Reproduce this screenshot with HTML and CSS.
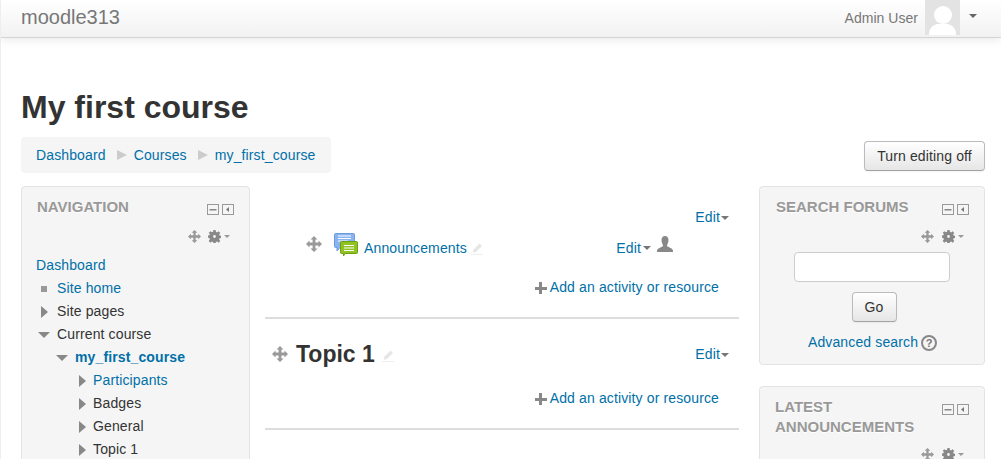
FILE: index.html
```html
<!DOCTYPE html>
<html lang="en">
<head>
<meta charset="utf-8">
<title>My first course</title>
<link rel="stylesheet" href="styles.css">
</head>
<body>
<svg class="defs" width="0" height="0" aria-hidden="true">
  <defs>
    <symbol id="move" viewBox="0 0 16 16"><path d="M8 0l3.500 3.500H9.400v3.100h3.100V4.500L16 8l-3.500 3.500V9.400H9.400v3.100h2.100L8 16l-3.500-3.500h2.100V9.400H3.500v2.100L0 8l3.500-3.500v2.100h3.100V3.500H4.500z" fill="#999"/></symbol>
    <symbol id="gear" viewBox="0 0 14 14"><path fill-rule="evenodd" d="M5.800 0h2.400l.3 2 1.300.6L11.500 1.400l1.700 1.700L12 4.700l.5 1.300 1.500.3v2.400l-1.500.3-.5 1.300 1.200 1.600-1.700 1.700-1.700-1.200-1.300.5-.3 1.500H5.800l-.3-1.500-1.300-.5-1.700 1.200-1.700-1.700L2 10l-.5-1.300L0 8.400V6l1.500-.3L2 4.400.8 2.900l1.700-1.600L4.200 2.500l1.300-.5zM7 5.500a1.500 1.500 0 1 0 0 3 1.500 1.500 0 0 0 0-3z" fill="#888"/></symbol>
    <symbol id="minus" viewBox="0 0 12 11"><rect x=".5" y=".5" width="11" height="10" fill="#f5f5f5" stroke="#999"/><rect x="2.500" y="5" width="7" height="1.500" fill="#888"/></symbol>
    <symbol id="dock" viewBox="0 0 12 11"><rect x=".5" y=".5" width="11" height="10" fill="#f5f5f5" stroke="#999"/><path d="M7 3v5L4 5.500z" fill="#777"/></symbol>
    <symbol id="pen" viewBox="0 0 12 12"><path d="M8.500.5l2.500 2.500-6 6-3.300.8.800-3.300z" fill="#e6e6e6"/><rect x="0" y="11" width="12" height="1" fill="#eee"/></symbol>
  </defs>
</svg>

<header class="navbar">
  <a class="brand">moodle313</a>
  <div class="usermenu">
    <span class="username">Admin User</span>
    <span class="avatar">
      <svg width="35" height="35" viewBox="0 0 35 35"><rect width="35" height="35" fill="#e3e3e3"/><ellipse cx="18" cy="15" rx="9" ry="9" fill="#fff"/><path d="M4 35c0-7 3-9 8-11h11c5 2 8 4 8 11z" fill="#fff"/></svg>
    </span>
    <span class="caret navcaret"></span>
  </div>
</header>

<div class="page">
  <h1 class="title">My first course</h1>
  <div class="headbar">
    <nav class="crumbs">
      <a>Dashboard</a><span class="sep"></span><a>Courses</a><span class="sep"></span><a>my_first_course</a>
    </nav>
    <button class="btn editbtn">Turn editing off</button>
  </div>

  <div class="cols">
    <aside class="block navblock">
      <div class="blockhead">
        <h2>NAVIGATION</h2>
        <div class="winctl"><svg class="ctl"><use href="#minus"/></svg><svg class="ctl"><use href="#dock"/></svg></div>
      </div>
      <div class="blockctl"><svg class="i13"><use href="#move"/></svg><svg class="i13 gear"><use href="#gear"/></svg><span class="caret small"></span></div>
      <ul class="tree">
        <li class="lvl0"><a>Dashboard</a></li>
        <li class="lvl1"><span class="square"></span><a>Site home</a></li>
        <li class="lvl1"><span class="tri-r"></span><span>Site pages</span></li>
        <li class="lvl1"><span class="tri-d"></span><span>Current course</span></li>
        <li class="lvl2"><span class="tri-d"></span><a class="strong">my_first_course</a></li>
        <li class="lvl3"><span class="tri-r"></span><a>Participants</a></li>
        <li class="lvl3"><span class="tri-r"></span><span>Badges</span></li>
        <li class="lvl3"><span class="tri-r"></span><span>General</span></li>
        <li class="lvl3"><span class="tri-r"></span><span>Topic 1</span></li>
      </ul>
    </aside>

    <main class="center">
      <section class="sect first">
        <div class="sectedit"><a>Edit</a><span class="caret"></span></div>
        <div class="activity">
          <svg class="i16 actmove"><use href="#move"/></svg>
          <svg class="forum" width="24" height="24" viewBox="0 0 24 24">
            <path d="M1.500.500h18a1 1 0 0 1 1 1v12a1 1 0 0 1-1 1H6l-3 3.500v-3.500H1.500a1 1 0 0 1-1-1v-12a1 1 0 0 1 1-1z" fill="#8ab4f0" stroke="#6d9ae0"/>
            <path d="M4 3h13M4 5.500h13M4 8h10" stroke="#fff"/>
            <path d="M7.500 8.500h15a1 1 0 0 1 1 1v10a1 1 0 0 1-1 1H11l-1.500 2.500v-2.500h-2a1 1 0 0 1-1-1v-10a1 1 0 0 1 1-1z" fill="#8fc31f" stroke="#6f9e12"/>
            <path d="M10 12.500h10M10 15h10M10 17.500h10" stroke="#fff"/>
          </svg>
          <a class="actname">Announcements</a>
          <svg class="i12 pen"><use href="#pen"/></svg>
          <span class="actright">
            <a>Edit</a><span class="caret"></span>
            <svg class="person" width="16" height="16" viewBox="0 0 16 16"><path d="M8 0c2.300 0 3.500 1.700 3.500 4S10.300 8.500 10 9.500c0 1 1.500 1.500 3.500 2.500 1.500.7 2.500 1.500 2.500 3v1H0v-1c0-1.500 1-2.300 2.500-3 2-1 3.500-1.500 3.500-2.500C5.700 8.500 4.500 6.300 4.500 4S5.700 0 8 0z" fill="#888"/></svg>
          </span>
        </div>
        <div class="addres"><span class="plus"></span><a>Add an activity or resource</a></div>
      </section>

      <section class="sect second">
        <div class="topichead">
          <svg class="i16"><use href="#move"/></svg>
          <h3>Topic 1</h3>
          <svg class="i12 pen2"><use href="#pen"/></svg>
          <div class="topicedit"><a>Edit</a><span class="caret"></span></div>
        </div>
        <div class="addres"><span class="plus"></span><a>Add an activity or resource</a></div>
      </section>
    </main>

    <aside class="rightcol">
      <div class="block search">
        <div class="blockhead">
          <h2>SEARCH FORUMS</h2>
          <div class="winctl"><svg class="ctl"><use href="#minus"/></svg><svg class="ctl"><use href="#dock"/></svg></div>
        </div>
        <div class="blockctl"><svg class="i13"><use href="#move"/></svg><svg class="i13 gear"><use href="#gear"/></svg><span class="caret small"></span></div>
        <div class="searchbody">
          <input class="field" type="text" aria-label="Search">
          <button class="btn gobtn">Go</button>
          <div class="adv"><a>Advanced search</a><span class="help">?</span></div>
        </div>
      </div>
      <div class="block latest">
        <div class="blockhead">
          <h2>LATEST ANNOUNCEMENTS</h2>
          <div class="winctl"><svg class="ctl"><use href="#minus"/></svg><svg class="ctl"><use href="#dock"/></svg></div>
        </div>
        <div class="blockctl"><svg class="i13"><use href="#move"/></svg><svg class="i13 gear"><use href="#gear"/></svg><span class="caret small"></span></div>
      </div>
    </aside>
  </div>
</div>
</body>
</html>
```

FILE: styles.css
```css
* { box-sizing: border-box; }
html, body { height: 459px; overflow: hidden; }
body {
  margin: 0;
  background: #fff;
  color: #333;
  font: 14px/20px "Liberation Sans", Arial, sans-serif;
  letter-spacing: .13px;
  border-left: 1px solid #eee;
}
a { color: #0070a8; text-decoration: none; }
.defs { position: absolute; }
svg { display: block; flex: none; }
.i12 { width: 12px; height: 12px; }
.i13 { width: 13px; height: 13px; }
.i16 { width: 16px; height: 16px; }
.ctl { width: 12px; height: 11px; }

.navbar {
  height: 38px;
  display: flex;
  justify-content: space-between;
  background: linear-gradient(#fff, #f2f2f2);
  border-bottom: 1px solid #d4d4d4;
  box-shadow: 0 1px 10px rgba(0,0,0,.1);
  padding-left: 20px;
}
.brand { color: #777; font-size: 20px; line-height: 35px; letter-spacing: 0; }
.usermenu { display: flex; align-items: flex-start; }
.username { color: #777; line-height: 36px; margin-right: 7px; letter-spacing: .03px; }
.avatar { width: 35px; height: 35px; overflow: hidden; }
.caret {
  display: inline-block;
  width: 0; height: 0;
  border-left: 4px solid transparent;
  border-right: 4px solid transparent;
  border-top: 4px solid #777;
  vertical-align: middle;
  margin-left: 1px;
}
.navcaret { margin: 14px 24px 0 9px; border-top-color: #666; }
.caret.small { border-left-width: 3.500px; border-right-width: 3.500px; border-top-width: 3.500px; border-top-color: #999; margin-left: 3px; }

.page { padding: 0 16px 0 20px; }
.title { margin: 49px 0 0; font-size: 32px; line-height: 40px; font-weight: 700; color: #333; letter-spacing: 0; }
.headbar { display: flex; justify-content: space-between; align-items: flex-end; margin-top: 10px; height: 36px; }
.crumbs {
  display: flex; align-items: center;
  height: 36px; padding: 0 15px 0 15px;
  background: #f5f5f5; border-radius: 4px;
}
.crumbs a:last-child { margin-right: 1px; }
.sep {
  width: 0; height: 0; margin: 0 7px 0 11px;
  border-left: 10px solid #ccc;
  border-top: 5px solid transparent;
  border-bottom: 5px solid transparent;
}
.btn {
  font: 14px/20px "Liberation Sans", Arial, sans-serif;
  letter-spacing: .13px;
  color: #333;
  background: linear-gradient(#fff, #e6e6e6);
  border: 1px solid #bbb;
  border-bottom-color: #a2a2a2;
  border-radius: 4px;
  box-shadow: inset 0 1px 0 rgba(255,255,255,.2), 0 1px 2px rgba(0,0,0,.05);
}
.editbtn { width: 121px; height: 30px; padding: 0; margin-bottom: 2px; }

.cols { display: flex; margin-top: 13px; align-items: flex-start; }
.block {
  background: #f5f5f5;
  border: 1px solid #e3e3e3;
  border-radius: 4px;
}
.navblock { width: 229px; height: 300px; padding: 10px 15px 0; flex: none; }
.blockhead { display: flex; justify-content: space-between; align-items: flex-start; }
.blockhead h2 { margin: 0; font-size: 15px; line-height: 20px; font-weight: 700; color: #999; text-shadow: 0 1px 0 #fff; letter-spacing: 0; }
.winctl { display: flex; gap: 3px; margin: 7px 0 0 0; }
.blockctl { display: flex; justify-content: flex-end; align-items: center; margin-top: 12px; height: 14px; padding-right: 4px; }
.gear { margin-left: 7px; }
.tree { list-style: none; margin: 11px 0 0; padding: 0; }
.tree li { height: 23px; line-height: 23px; display: flex; align-items: center; color: #333; }
.lvl0 { margin-left: -1px; }
.lvl1 { padding-left: 2px; }
.lvl2 { padding-left: 20px; }
.lvl3 { padding-left: 40px; }
.square { width: 6px; height: 6px; background: #999; margin-left: 2px; margin-right: 10px; }
.tri-r { width: 0; height: 0; margin-left: 2px; border-left: 7px solid #888; border-top: 6px solid transparent; border-bottom: 6px solid transparent; }
.lvl1 > .tri-r { margin-right: 9px; }
.lvl3 > .tri-r { margin-right: 7px; }
.tri-d { width: 0; height: 0; border-top: 6px solid #888; border-left: 6px solid transparent; border-right: 6px solid transparent; }
.lvl1 > .tri-d { margin-right: 7px; margin-left: -1px; }
.lvl2 > .tri-d { margin-left: -1px; margin-right: 7px; }
.strong { font-weight: 700; }

.center { width: 474px; margin-left: 15px; flex: none; }
.sect { border-bottom: 2px solid #ddd; }
.first { height: 133px; padding-top: 21px; }
.second { height: 111px; padding-top: 17px; }
.sectedit { text-align: right; padding-right: 10px; height: 20px; }
.activity { display: flex; align-items: center; height: 26px; margin-top: 4px; padding-left: 41px; }
.actmove { margin-top: 0; }
.forum { margin: 1px 0 0 12px; }
.actname { margin-left: 6px; margin-top: 7px; }
.pen { margin: 10px 0 0 4px; }
.actright { margin-left: auto; margin-right: 66px; display: flex; align-items: center; margin-top: 7px; }
.actright .caret { margin-left: 2px; }
.person { margin: -7px 0 0 6px; }
.addres { display: flex; justify-content: flex-end; align-items: center; padding-right: 20px; margin-top: 20px; height: 20px; }
.plus { width: 12px; height: 12px; margin-right: 3px; margin-top: 2px; background:
  linear-gradient(#888,#888) center/12px 3px no-repeat,
  linear-gradient(#888,#888) center/3px 12px no-repeat; }
.topichead { display: flex; align-items: center; height: 36px; padding-left: 7px; }
.topichead h3 { margin: 0 0 0 8px; font-size: 23px; line-height: 30px; font-weight: 700; color: #333; letter-spacing: 0; }
.pen2 { margin: 4px 0 0 7px; }
.topicedit { margin-left: auto; padding-right: 10px; }
.second .addres { margin-top: 16px; }

.rightcol { width: 226px; margin-left: 20px; flex: none; }
.search { height: 179px; padding: 10px 15px 0 16px; }
.search .blockctl, .latest .blockctl { padding-right: 5px; }
.search .gear, .latest .gear { margin-left: 8px; }
.searchbody { display: flex; flex-direction: column; align-items: center; margin-top: 9px; }
.field { width: 156px; height: 30px; background: #fff; border: 1px solid #ccc; border-radius: 4px; margin-left: -2px; }
.gobtn { width: 45px; height: 30px; padding: 0; margin-top: 10px; margin-left: 3px; }
.adv { display: flex; align-items: center; margin-top: 10px; margin-left: 0; }
.help {
  width: 16px; height: 16px; margin-left: 3px; margin-top: 1px;
  border: 2px solid #888; border-radius: 50%;
  color: #777; font-size: 11px; font-weight: 700; line-height: 12px; text-align: center; letter-spacing: 0;
}
.latest { margin-top: 21px; height: 100px; padding: 10px 15px 0; }
.latest .blockhead h2 { width: 160px; }
.latest .blockctl { margin-top: 10px; }
```
